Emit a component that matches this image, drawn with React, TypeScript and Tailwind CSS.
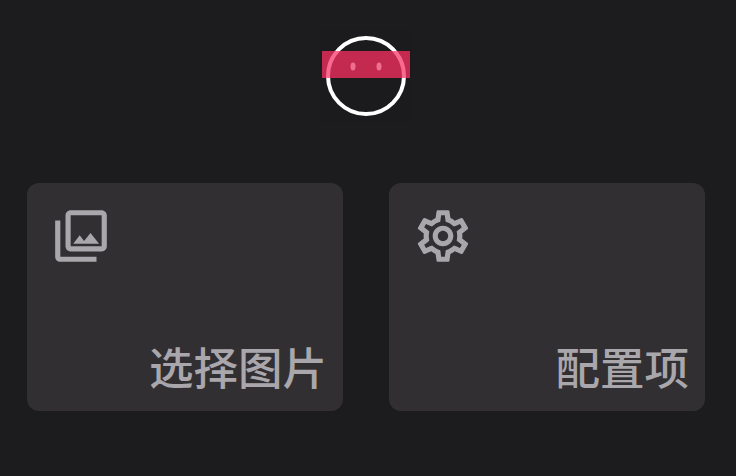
import { MdOutlinePhotoLibrary, MdOutlineSettings } from "react-icons/md";

function Logo() {
  return (
    <svg width="92" height="92" viewBox="0 0 92 92">
      <defs>
        <clipPath id="band">
          <rect x="2" y="21" width="88" height="27" />
        </clipPath>
      </defs>
      <rect x="0" y="0" width="92" height="92" fill="#1b1a1d" />
      <circle cx="46" cy="46" r="38" fill="none" stroke="#ffffff" strokeWidth="4" />
      <rect x="2" y="21" width="88" height="27" fill="#c42a50" />
      <circle cx="46" cy="46" r="38" fill="none" stroke="#f86a90" strokeWidth="4" clipPath="url(#band)" />
      <ellipse cx="33" cy="36.5" rx="2.5" ry="4" fill="#ee6f8f" />
      <ellipse cx="59" cy="36.5" rx="2.5" ry="4" fill="#ee6f8f" />
    </svg>
  );
}

function Card({ icon, label }: { icon: React.ReactNode; label: string }) {
  return (
    <button className="flex h-[228px] flex-col justify-between rounded-xl bg-[#322f33] pt-[22px] pb-[17px] pl-[23px] pr-[16px] text-[#a9a7ab]">
      {icon}
      <span className="self-end text-[44.5px] leading-[56px] font-medium font-['Noto_Sans_CJK_SC',sans-serif]">{label}</span>
    </button>
  );
}

export default function App() {
  return (
    <div className="flex h-[476px] w-[736px] flex-col bg-[#1c1b1e] pt-[30px]">
      <div className="flex justify-center pr-[4px]">
        <Logo />
      </div>
      <div className="mt-[61px] grid grid-cols-2 gap-[46px] pl-[27px] pr-[31px]">
        <Card icon={<MdOutlinePhotoLibrary size={62} />} label="选择图片" />
        <Card icon={<MdOutlineSettings size={62} />} label="配置项" />
      </div>
    </div>
  );
}
